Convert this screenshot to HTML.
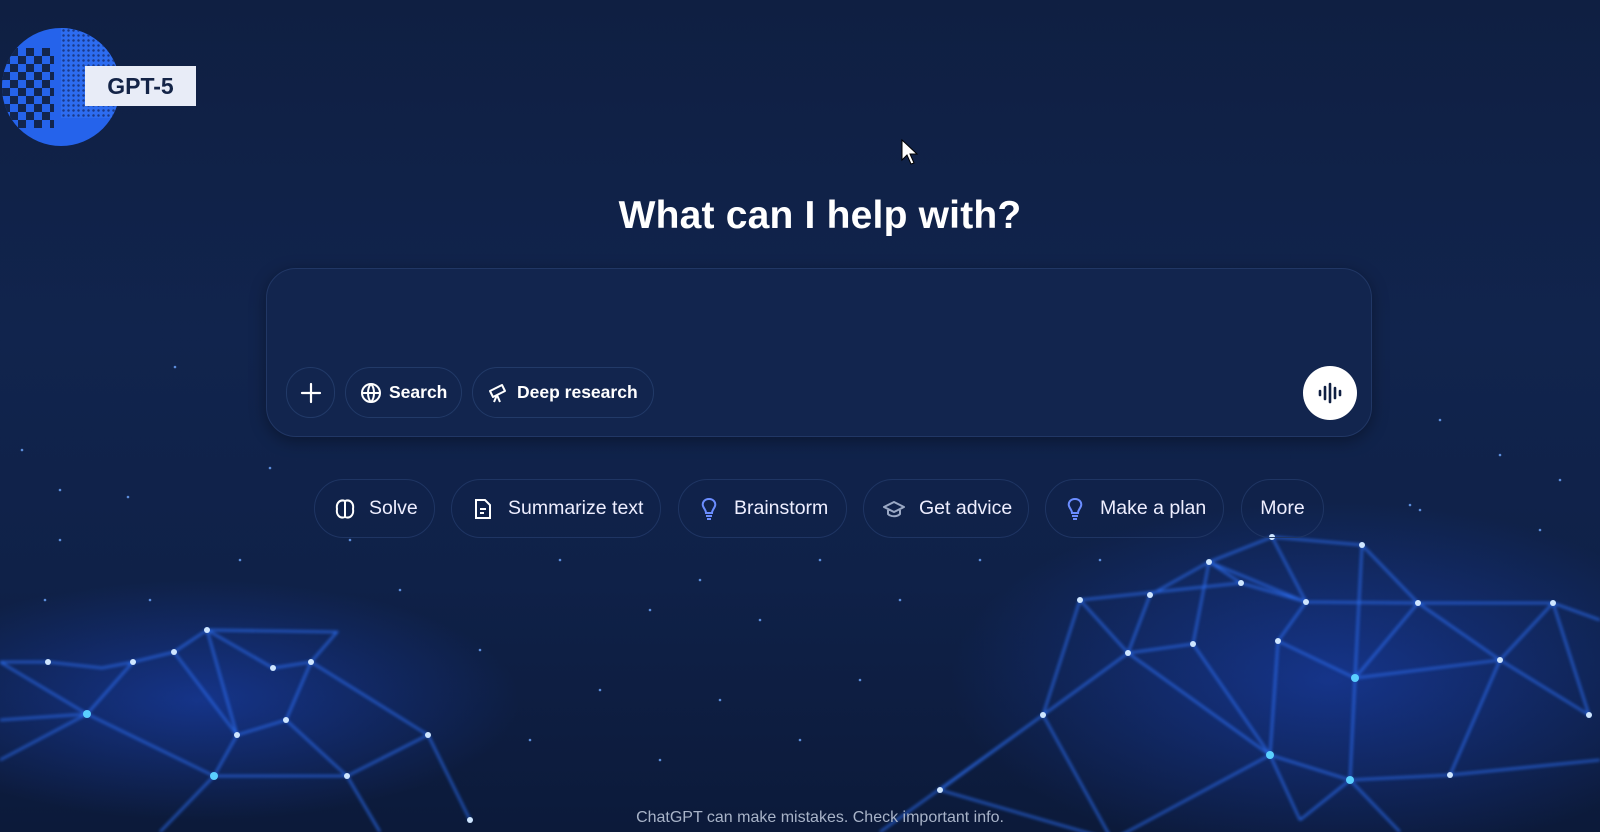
<!DOCTYPE html>
<html><head><meta charset="utf-8"><style>
*{margin:0;padding:0;box-sizing:border-box}
body{width:1600px;height:832px;overflow:hidden;background:linear-gradient(180deg,#0f1f42 0%,#11244d 40%,#0f2148 70%,#0c1a3a 100%);font-family:"Liberation Sans","DejaVu Sans",sans-serif;color:#fff;position:relative}
.abs{position:absolute}
h1{position:absolute;left:0;width:1640px;top:194px;text-align:center;font-size:39px;font-weight:600;letter-spacing:0.2px}
.box{left:266px;top:268px;width:1106px;height:169px;border-radius:30px;background:#12254e;border:1px solid #213765;box-shadow:0 4px 16px rgba(0,0,0,.35)}
.pill{position:absolute;height:51px;border:1px solid #223a68;border-radius:26px;display:flex;align-items:center;font-size:17.5px;font-weight:600;color:#fff}
.sug{position:absolute;top:479px;height:59px;border:1px solid #1f3563;border-radius:30px;display:flex;align-items:center;font-size:19.5px;color:#eef}
svg.i{flex:none}
</style></head><body>
<svg class="abs" style="left:0;top:0" width="1600" height="832">
<defs>
<radialGradient id="g1" cx="0.5" cy="0.5" r="0.5"><stop offset="0" stop-color="#1f4fe0" stop-opacity=".45"/><stop offset="1" stop-color="#1f4fe0" stop-opacity="0"/></radialGradient>
<filter id="bl"><feGaussianBlur stdDeviation="1.5"/></filter>
</defs>
<ellipse cx="1330" cy="680" rx="380" ry="180" fill="url(#g1)"/>
<ellipse cx="200" cy="700" rx="320" ry="120" fill="url(#g1)"/>
<g stroke="#2f74ff" stroke-width="1.8" fill="none" opacity=".9" filter="url(#bl)">
<path d="M1209 562L1272 537L1362 545L1418 603L1553 603L1600 620M1209 562L1241 583L1080 600L1043 715M1209 562L1150 595L1128 653L1193 644L1209 562M1209 562L1306 602L1278 641L1355 678L1418 603M1272 537L1306 602M1362 545L1355 678M1418 603L1500 660L1553 603M1043 715L1128 653L1270 755L1350 780L1355 678L1500 660L1589 715L1553 603M1043 715L1112 840L1270 755M940 790L1043 715M940 790L1112 840M1278 641L1270 755M1193 644L1270 755M1450 775L1350 780M1450 775L1500 660M1300 820L1270 755M1300 820L1350 780M1080 600L1128 653M1241 583L1306 602L1418 603M1450 775L1600 760M880 832L1043 715M1350 780L1400 832"/>
<path d="M0 662L48 662L102 668L133 662L174 652L207 630L273 668L311 662L286 720L237 735L214 776L347 776L428 735L470 820M207 630L237 735M207 630L337 632L311 662M286 720L347 776M0 720L87 714L133 662M87 714L214 776M0 760L87 714M174 652L237 735M428 735L311 662M214 776L160 832M347 776L380 832M0 662L87 714"/>
</g>
<g fill="#cfe6ff">
<circle cx="1209" cy="562" r="3"/><circle cx="1272" cy="537" r="3"/><circle cx="1362" cy="545" r="3"/><circle cx="1418" cy="603" r="3"/><circle cx="1553" cy="603" r="3"/><circle cx="1306" cy="602" r="3"/><circle cx="1241" cy="583" r="3"/><circle cx="1128" cy="653" r="3"/><circle cx="1193" cy="644" r="3"/><circle cx="1278" cy="641" r="3"/><circle cx="1355" cy="678" r="4" fill="#5ad0ff"/><circle cx="1500" cy="660" r="3"/><circle cx="1043" cy="715" r="3"/><circle cx="1270" cy="755" r="4" fill="#5ad0ff"/><circle cx="1350" cy="780" r="4" fill="#5ad0ff"/><circle cx="1589" cy="715" r="3"/><circle cx="1080" cy="600" r="3"/><circle cx="1150" cy="595" r="3"/><circle cx="940" cy="790" r="3"/><circle cx="1450" cy="775" r="3"/>
<circle cx="48" cy="662" r="3"/><circle cx="133" cy="662" r="3"/><circle cx="174" cy="652" r="3"/><circle cx="207" cy="630" r="3"/><circle cx="273" cy="668" r="3"/><circle cx="311" cy="662" r="3"/><circle cx="286" cy="720" r="3"/><circle cx="237" cy="735" r="3"/><circle cx="214" cy="776" r="4" fill="#5ad0ff"/><circle cx="347" cy="776" r="3"/><circle cx="428" cy="735" r="3"/><circle cx="87" cy="714" r="4" fill="#5ad0ff"/><circle cx="470" cy="820" r="3"/>
</g>
<g fill="#6fa8ff" opacity=".8">
<circle cx="175" cy="367" r="1.3"/><circle cx="22" cy="450" r="1.3"/><circle cx="60" cy="490" r="1.3"/><circle cx="128" cy="497" r="1.3"/><circle cx="270" cy="468" r="1.3"/><circle cx="60" cy="540" r="1.3"/><circle cx="240" cy="560" r="1.3"/><circle cx="400" cy="590" r="1.3"/><circle cx="560" cy="560" r="1.3"/><circle cx="650" cy="610" r="1.3"/><circle cx="700" cy="580" r="1.3"/><circle cx="760" cy="620" r="1.3"/><circle cx="820" cy="560" r="1.3"/><circle cx="900" cy="600" r="1.3"/><circle cx="480" cy="650" r="1.3"/><circle cx="600" cy="690" r="1.3"/><circle cx="720" cy="700" r="1.3"/><circle cx="860" cy="680" r="1.3"/><circle cx="980" cy="560" r="1.3"/><circle cx="1420" cy="510" r="1.3"/><circle cx="1440" cy="420" r="1.3"/><circle cx="1500" cy="455" r="1.3"/><circle cx="1560" cy="480" r="1.3"/><circle cx="1540" cy="530" r="1.3"/><circle cx="1410" cy="505" r="1.3"/><circle cx="530" cy="740" r="1.3"/><circle cx="660" cy="760" r="1.3"/><circle cx="800" cy="740" r="1.3"/><circle cx="45" cy="600" r="1.3"/><circle cx="150" cy="600" r="1.3"/><circle cx="350" cy="540" r="1.3"/><circle cx="1100" cy="560" r="1.3"/>
</g>
</svg>

<!-- logo -->
<div class="abs" style="left:2px;top:28px;width:118px;height:118px;border-radius:50%;background:#2563eb;overflow:hidden">
<div class="abs" style="left:59px;top:0;width:59px;height:90px;background:radial-gradient(#1a3a8a 1px,transparent 1.5px) 0 0/5px 5px,#2d6cf0"></div>
<div class="abs" style="left:0;top:20px;width:52px;height:80px;background:conic-gradient(#12254e 25%,#2563eb 0 50%,#12254e 0 75%,#2563eb 0) 0 0/16px 16px"></div>
</div>
<div class="abs" style="left:85px;top:66px;width:111px;height:40px;background:#e8ecf7;color:#142447;font-size:23px;font-weight:700;display:flex;align-items:center;justify-content:center">GPT-5</div>

<svg class="abs" style="left:900px;top:138px" width="20" height="30"><path d="M2 2L2 22L7 17L11 26L14 25L10 16L17 16Z" fill="#fff" stroke="#000" stroke-width="1"/></svg>

<h1>What can I help with?</h1>

<div class="abs box"></div>
<div class="pill" style="left:286px;top:367px;width:49px;justify-content:center"><svg class="i" width="22" height="22"><path d="M11 2V20M2 11H20" stroke="#fff" stroke-width="2.2" stroke-linecap="round"/></svg></div>
<div class="pill" style="left:345px;top:367px;width:117px;padding-left:14px"><svg class="i" width="22" height="22" fill="none" stroke="#fff" stroke-width="2"><circle cx="11" cy="11" r="9"/><path d="M2 11H20M11 2C7 6 7 16 11 20M11 2C15 6 15 16 11 20"/></svg><span style="margin-left:7px">Search</span></div>
<div class="pill" style="left:472px;top:367px;width:182px;padding-left:14px"><svg class="i" width="22" height="22" fill="none" stroke="#fff" stroke-width="2" stroke-linejoin="round"><path d="M3 9L15 3L18 9L6 15Z M6 15L4 11M10 13L7 20M10 13L13 20"/></svg><span style="margin-left:8px">Deep research</span></div>
<div class="abs" style="left:1303px;top:366px;width:54px;height:54px;border-radius:50%;background:#fff;display:flex;align-items:center;justify-content:center"><svg width="26" height="22"><path d="M3 9V13M8 5V17M13 2V20M18 6V16M23 9V13" stroke="#0f1f42" stroke-width="2.6" stroke-linecap="round"/></svg></div>

<div class="sug" style="left:314px;width:121px;padding-left:19px"><svg class="i" width="22" height="22" fill="none" stroke="#fff" stroke-width="2"><path d="M11 3C6 1 2 5 3 11C2 17 6 21 11 19C16 21 20 17 19 11C20 5 16 1 11 3ZM11 3V19"/></svg><span style="margin-left:13px">Solve</span></div>
<div class="sug" style="left:451px;width:210px;padding-left:21px"><svg class="i" width="20" height="22" fill="none" stroke="#fff" stroke-width="2"><path d="M3 2H12L17 7V20H3Z M7 11H13M7 15H11"/></svg><span style="margin-left:15px">Summarize text</span></div>
<div class="sug" style="left:678px;width:169px;padding-left:19px"><svg class="i" width="22" height="24" fill="none" stroke="#6b8dff" stroke-width="2"><path d="M11 2C6 2 4 6 5 9C6 12 8 13 8 16H14C14 13 16 12 17 9C18 6 16 2 11 2ZM8 19H14M9 22H13"/></svg><span style="margin-left:14px">Brainstorm</span></div>
<div class="sug" style="left:863px;width:166px;padding-left:18px"><svg class="i" width="24" height="22" fill="none" stroke="#9aa8c4" stroke-width="2" stroke-linejoin="round"><path d="M2 9L12 4L22 9L12 14Z M6 11V16C9 19 15 19 18 16V11"/></svg><span style="margin-left:13px">Get advice</span></div>
<div class="sug" style="left:1045px;width:179px;padding-left:18px"><svg class="i" width="22" height="24" fill="none" stroke="#6b8dff" stroke-width="2"><path d="M11 2C6 2 4 6 5 9C6 12 8 13 8 16H14C14 13 16 12 17 9C18 6 16 2 11 2ZM8 19H14M9 22H13"/></svg><span style="margin-left:14px">Make a plan</span></div>
<div class="sug" style="left:1241px;width:83px;justify-content:center">More</div>

<div class="abs" style="left:0;width:1640px;top:809px;text-align:center;font-size:16px;color:#a8b3c8">ChatGPT can make mistakes. Check important info.</div>
</body></html>
